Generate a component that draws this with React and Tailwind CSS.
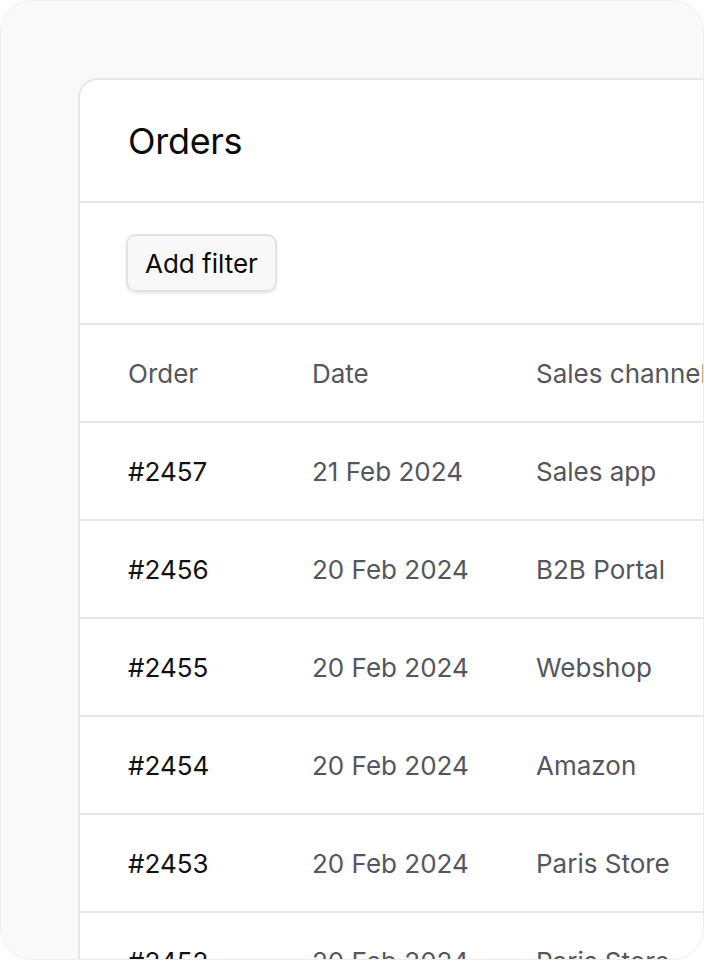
import React from 'react';

const orders = [
    { id: '#2457', date: '21 Feb 2024', channel: 'Sales app' },
    { id: '#2456', date: '20 Feb 2024', channel: 'B2B Portal' },
    { id: '#2455', date: '20 Feb 2024', channel: 'Webshop' },
    { id: '#2454', date: '20 Feb 2024', channel: 'Amazon' },
    { id: '#2453', date: '20 Feb 2024', channel: 'Paris Store' },
    { id: '#2452', date: '20 Feb 2024', channel: 'Paris Store' },
];

function Row({ cells, head }) {
    return (
        <div className="flex items-center h-[98px] border-b-2 border-[#e7e7e7] pl-[48px]">
            <div className={`w-[184px] ${head ? 'text-[#55555e]' : 'text-[#111111]'}`}>{cells[0]}</div>
            <div className="w-[224px] text-[#55555e]">{cells[1]}</div>
            <div className="w-[260px] text-[#55555e] whitespace-nowrap">{cells[2]}</div>
        </div>
    );
}

export default function App() {
    return (
        <div className="bg-white w-[704px] h-[960px]" style={{ fontFamily: 'Inter, "Noto Sans", sans-serif' }}>
            <div className="w-[704px] h-[960px] rounded-[32px] border border-[#ededed] bg-[#f9f9f9] overflow-hidden">
                <div className="ml-[77px] mt-[77px] w-[800px] bg-white border-2 border-[#e7e7e7] rounded-tl-[20px]">
                    {/* Header */}
                    <div className="h-[123px] flex items-center pl-[48px] border-b-2 border-[#e7e7e7]">
                        <h1 className="text-[36px] text-[#0a0a0a] tracking-[-0.3px]">Orders</h1>
                    </div>

                    {/* Filters */}
                    <div className="h-[122px] flex items-center pl-[46px] border-b-2 border-[#e7e7e7]">
                        <button className="h-[58px] px-[17px] rounded-[10px] border-2 border-[#e2e2e2] bg-[#f8f8f8] shadow-[0_2px_3px_rgba(0,0,0,0.08)] text-[26px] text-[#0a0a0a]">
                            Add filter
                        </button>
                    </div>

                    {/* Table */}
                    <div className="text-[26px]">
                        <Row head cells={['Order', 'Date', 'Sales channel']} />
                        {orders.map(o => (
                            <Row key={o.id} cells={[o.id, o.date, o.channel]} />
                        ))}
                    </div>
                </div>
            </div>
        </div>
    );
}
